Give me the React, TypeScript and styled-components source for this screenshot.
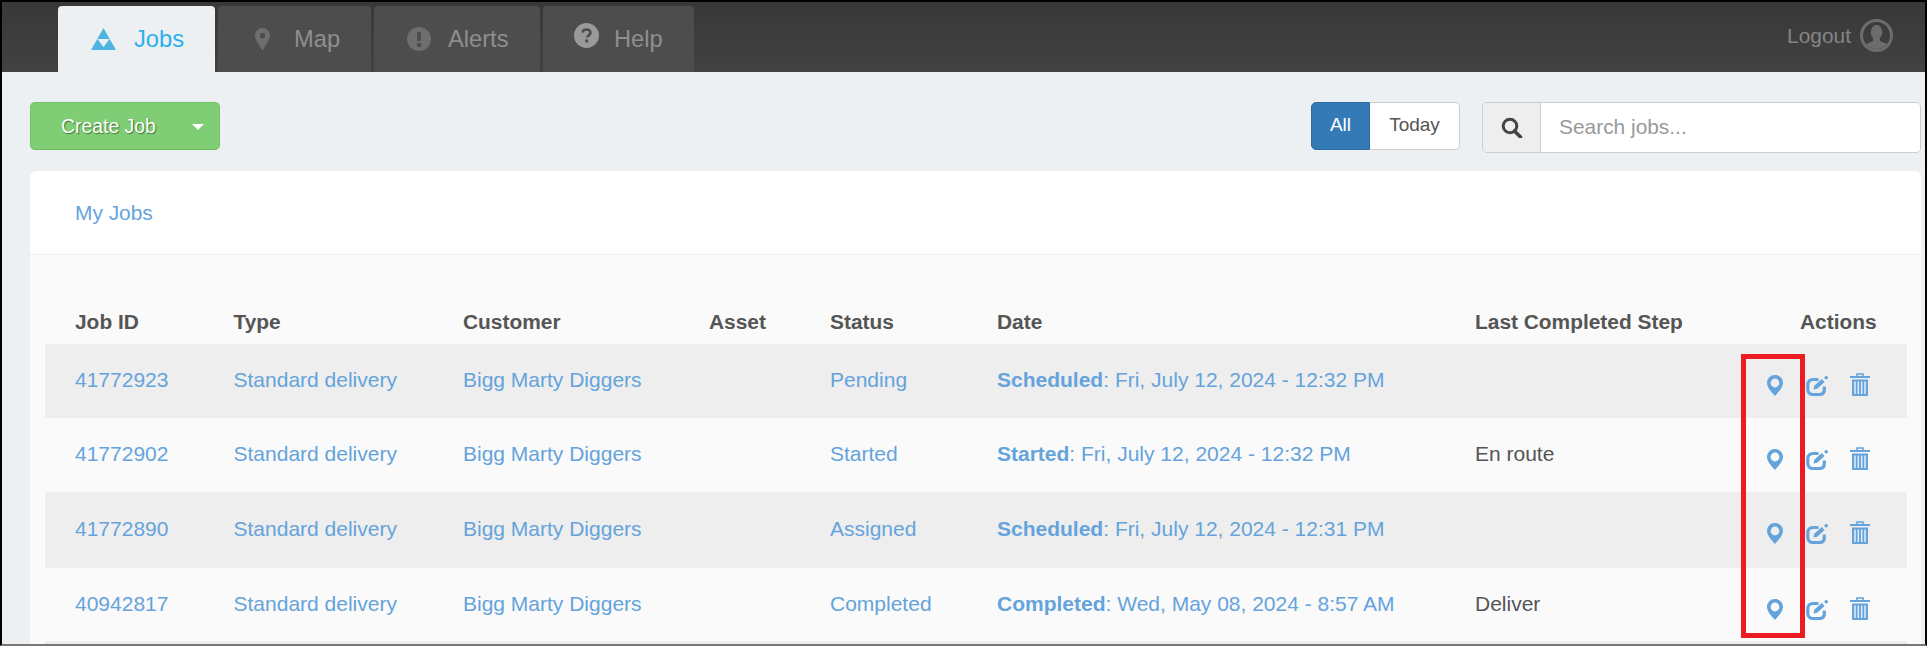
import React from "react";
import styled, { createGlobalStyle } from "styled-components";

const Global = createGlobalStyle`
  html, body { margin: 0; padding: 0; background: #fff; overflow: hidden; }
  * { box-sizing: border-box; }
  body { font-family: "Liberation Sans", Arial, sans-serif; }
`;

const Frame = styled.div`
  position: relative;
  width: 1927px;
  height: 646px;
  border: 2px solid #000;
  border-bottom: 2px solid #777;
  background: #edf0f3;
  overflow: hidden;
`;

const TopBar = styled.header`
  display: flex;
  height: 70px;
  padding: 4px 32px 0 56px;
  background: linear-gradient(#383838, #424242);
`;

const Tabs = styled.nav`
  display: flex;
  gap: 3px;
`;

const Tab = styled.a<{ $width: number; $pad: number; $gap: number; $active?: boolean }>`
  display: flex;
  align-items: center;
  width: ${(p) => p.$width}px;
  padding-left: ${(p) => p.$pad}px;
  gap: ${(p) => p.$gap}px;
  height: 66px;
  border-radius: 4px 4px 0 0;
  font-size: 23.7px;
  background: ${(p) => (p.$active ? "#edf0f3" : "#4d4d4d")};
  color: ${(p) => (p.$active ? "#2bb0ee" : "#8f8f8f")};
`;

const TabIcon = styled.svg<{ $lift?: number }>`
  display: block;
  flex: none;
  margin-top: ${(p) => -(p.$lift ?? 0)}px;
`;

const Logout = styled.div`
  display: flex;
  align-items: center;
  gap: 9px;
  margin-left: auto;
  height: 33px;
  margin-top: 13px;
  font-size: 20.9px;
  color: #858585;
`;

const Content = styled.main`
  padding: 30px 4px 0 28px;
`;

const Toolbar = styled.div`
  display: flex;
  align-items: flex-start;
  height: 51px;
`;

const CreateButton = styled.button`
  display: flex;
  align-items: center;
  width: 190px;
  height: 48px;
  padding: 0 0 0 30px;
  border: 1px solid #74c267;
  border-bottom-color: #66b85a;
  border-radius: 5px;
  background: #7fcd74;
  color: #fff;
  font: 19.4px "Liberation Sans", Arial, sans-serif;
  text-shadow: 1px 1px 1px rgba(40, 90, 30, 0.75);
`;

const Caret = styled.span`
  width: 0;
  height: 0;
  margin-left: 36px;
  margin-top: 2px;
  border-top: 6px solid #fff;
  border-left: 6px solid transparent;
  border-right: 6px solid transparent;
`;

const Segments = styled.div`
  display: flex;
  margin-left: auto;
  height: 48px;
`;

const Segment = styled.button<{ $active?: boolean }>`
  height: 48px;
  width: ${(p) => (p.$active ? 59 : 90)}px;
  padding: 0 0 2px;
  border: 1px solid ${(p) => (p.$active ? "#2e6da4" : "#ccc")};
  border-left-width: ${(p) => (p.$active ? 1 : 0)}px;
  border-radius: ${(p) => (p.$active ? "5px 0 0 5px" : "0 5px 5px 0")};
  background: ${(p) => (p.$active ? "#337ab7" : "#fff")};
  color: ${(p) => (p.$active ? "#fff" : "#555")};
  font: 19px "Liberation Sans", Arial, sans-serif;
`;

const Search = styled.div`
  display: flex;
  width: 439px;
  height: 51px;
  margin-left: 22px;
  border: 1px solid #ccc;
  border-radius: 5px;
  overflow: hidden;
`;

const SearchAddon = styled.span`
  display: flex;
  align-items: center;
  justify-content: center;
  width: 58px;
  flex: none;
  background: #eee;
  border-right: 1px solid #ccc;
`;

const SearchInput = styled.input`
  flex: 1;
  min-width: 0;
  border: 0;
  outline: 0;
  padding: 0 0 1px 18px;
  background: #fff;
  font: 20.9px "Liberation Sans", Arial, sans-serif;
  &::placeholder { color: #999; opacity: 1; }
`;

const Card = styled.section`
  margin-top: 18px;
  background: #fafafa;
  border-radius: 7px 7px 0 0;
  height: 480px;
`;

const CardHead = styled.div`
  display: flex;
  align-items: center;
  height: 84px;
  padding-left: 45px;
  background: #fff;
  border-bottom: 1px solid #eee;
  border-radius: 7px 7px 0 0;
  font-size: 20.9px;
  color: #65a3dc;
`;

const TableBody = styled.div`
  padding: 0 14px 0 15px;
`;

const columns = "158.5px 229.5px 246px 121px 167px 478px 292px 1fr";

const HeadRow = styled.div`
  display: grid;
  grid-template-columns: ${columns};
  align-items: center;
  height: 89px;
  padding: 45px 0 0 30px;
  font-size: 20.9px;
  font-weight: 700;
  color: #555;
`;

const HeadActions = styled.span`
  padding-left: 33px;
`;

const Row = styled.div<{ $height: number; $odd: boolean }>`
  display: grid;
  grid-template-columns: ${columns};
  align-items: center;
  height: ${(p) => p.$height}px;
  padding-left: 30px;
  padding-bottom: 2px;
  font-size: 21px;
  color: #65a3dc;
  background: ${(p) => (p.$odd ? "#eee" : "#fafafa")};
`;

const StepCell = styled.span`
  color: #555;
`;

const ActionCell = styled.span`
  display: flex;
  align-items: flex-end;
  gap: 22px;
  align-self: start;
  height: 23px;
  margin-top: 29px;
`;

const ActionIcon = styled.svg`
  display: block;
  flex: none;
`;

const Callout = styled.div`
  position: absolute;
  left: 1739px;
  top: 352px;
  width: 64px;
  height: 284px;
  border: 5px solid #ed1c24;
  pointer-events: none;
`;

const PinPath = "M8 0C3.6 0 0 3.5 0 7.9c0 4.9 5.6 10 8 13.1 2.4-3.1 8-8.2 8-13.1C16 3.5 12.4 0 8 0zm0 3.6a4.4 4.4 0 1 1 0 8.8 4.4 4.4 0 0 1 0-8.8z";

const JobsIcon = () => (
  <TabIcon width="25" height="22" viewBox="0 0 25 22">
    <path d="M12.5 0 25 22H0z" fill="#4fb4e2" />
    <path d="M6.5 11h12l-6 8z" fill="#edf0f3" />
  </TabIcon>
);
const MapIcon = () => (
  <TabIcon width="15" height="23" viewBox="0 0 15 23">
    <path fillRule="evenodd" d="M7.5 0C3.4 0 0 3.3 0 7.4 0 12 5.4 18.400 7.500 23c2.100-4.600 7.500-11 7.500-15.600C15 3.300 11.600 0 7.500 0zm0 4.800a2.800 2.800 0 1 1 0 5.600 2.800 2.800 0 0 1 0-5.600z" fill="#6e6e6e" />
  </TabIcon>
);
const AlertIcon = () => (
  <TabIcon width="24" height="24" viewBox="0 0 24 24">
    <circle cx="12" cy="12" r="12" fill="#6e6e6e" />
    <rect x="10" y="5" width="4" height="9" rx="1" fill="#4d4d4d" />
    <rect x="10" y="16" width="4" height="4" rx="1" fill="#4d4d4d" />
  </TabIcon>
);
const HelpIcon = () => (
  <TabIcon $lift={7} width="25" height="25" viewBox="0 0 25 25">
    <circle cx="12.500" cy="12.500" r="12.500" fill="#999" />
    <path d="M8.500 9.500c.3-2 1.900-3 4-3 2.300 0 3.900 1.300 3.900 3.200 0 2.700-3 2.600-3 4.800" fill="none" stroke="#4d4d4d" strokeWidth="2.600" />
    <rect x="11.200" y="16.500" width="3" height="3" fill="#4d4d4d" />
  </TabIcon>
);
const Avatar = () => (
  <svg width="33" height="33" viewBox="0 0 33 33" style={{ display: "block" }}>
    <defs>
      <clipPath id="avatar-clip"><circle cx="16.500" cy="16.500" r="13.500" /></clipPath>
    </defs>
    <circle cx="16.500" cy="16.500" r="15" fill="none" stroke="#6c6c6c" strokeWidth="3" />
    <g clipPath="url(#avatar-clip)" fill="#6c6c6c">
      <ellipse cx="16.500" cy="13" rx="5.800" ry="7.200" />
      <path d="M13 19h7v3l7 3v8H6v-8l7-3z" />
    </g>
  </svg>
);
const SearchGlyph = () => (
  <svg width="22" height="21" viewBox="0 0 22 21" style={{ display: "block" }}>
    <circle cx="9" cy="9" r="6.800" fill="none" stroke="#444" strokeWidth="3" />
    <path d="M13.500 14l6 6" stroke="#444" strokeWidth="3.600" strokeLinecap="round" />
  </svg>
);
const PinIcon = () => (
  <ActionIcon width="17" height="21" viewBox="0 0 17 21">
    <path fillRule="evenodd" d={PinPath} fill="#65a3dc" />
  </ActionIcon>
);
const EditIcon = () => (
  <ActionIcon width="22" height="20" viewBox="0 0 22 20">
    <path d="M12.500 3.500H7C3.900 3.500 1.800 5.500 1.800 8.500v5c0 3 2.100 5 5.200 5h6.500c3 0 4.800-2 4.800-5V10.500" fill="none" stroke="#65a3dc" strokeWidth="3.200" />
    <path d="M7.500 13.500l.8-3.700 7.400-6.800 2.900 2.900-7.400 6.800z" fill="#65a3dc" />
    <circle cx="20.200" cy="1.800" r="1.800" fill="#65a3dc" />
  </ActionIcon>
);
const TrashIcon = () => (
  <ActionIcon width="20" height="23" viewBox="0 0 20 23">
    <path d="M7 3V1h6v2" fill="none" stroke="#65a3dc" strokeWidth="1.600" />
    <rect x="0" y="3" width="20" height="2" fill="#65a3dc" />
    <path d="M2 6.500h16V23H2z" fill="#65a3dc" />
    <path d="M5 8.500v12.500M8.300 8.500v12.500M11.700 8.500v12.500M15 8.500v12.500" stroke="#e3eef9" strokeWidth="1.500" />
  </ActionIcon>
);

const tabs = [
  { label: "Jobs", width: 157, pad: 33, gap: 18, active: true, icon: <JobsIcon /> },
  { label: "Map", width: 153, pad: 37, gap: 24, icon: <MapIcon /> },
  { label: "Alerts", width: 166, pad: 33, gap: 17, icon: <AlertIcon /> },
  { label: "Help", width: 151, pad: 31, gap: 15, icon: <HelpIcon /> },
];

const jobs = [
  { id: "41772923", status: "Pending", kind: "Scheduled", date: "Fri, July 12, 2024 - 12:32 PM", step: "", h: 74 },
  { id: "41772902", status: "Started", kind: "Started", date: "Fri, July 12, 2024 - 12:32 PM", step: "En route", h: 74 },
  { id: "41772890", status: "Assigned", kind: "Scheduled", date: "Fri, July 12, 2024 - 12:31 PM", step: "", h: 76 },
  { id: "40942817", status: "Completed", kind: "Completed", date: "Wed, May 08, 2024 - 8:57 AM", step: "Deliver", h: 73 },
];

export default function App() {
  return (
    <>
      <Global />
      <Frame>
        <TopBar>
          <Tabs>
            {tabs.map((t) => (
              <Tab key={t.label} $width={t.width} $pad={t.pad} $gap={t.gap} $active={t.active}>
                {t.icon}
                {t.label}
              </Tab>
            ))}
          </Tabs>
          <Logout>
            Logout
            <Avatar />
          </Logout>
        </TopBar>
        <Content>
          <Toolbar>
            <CreateButton>
              Create Job
              <Caret />
            </CreateButton>
            <Segments>
              <Segment $active>All</Segment>
              <Segment>Today</Segment>
            </Segments>
            <Search>
              <SearchAddon>
                <SearchGlyph />
              </SearchAddon>
              <SearchInput placeholder="Search jobs..." />
            </Search>
          </Toolbar>
          <Card>
            <CardHead>My Jobs</CardHead>
            <TableBody>
              <HeadRow>
                <span>Job ID</span>
                <span>Type</span>
                <span>Customer</span>
                <span>Asset</span>
                <span>Status</span>
                <span>Date</span>
                <span>Last Completed Step</span>
                <HeadActions>Actions</HeadActions>
              </HeadRow>
              {jobs.map((j, i) => (
                <Row key={j.id} $height={j.h} $odd={i % 2 === 0}>
                  <span>{j.id}</span>
                  <span>Standard delivery</span>
                  <span>Bigg Marty Diggers</span>
                  <span />
                  <span>{j.status}</span>
                  <span>
                    <b>{j.kind}</b>: {j.date}
                  </span>
                  <StepCell>{j.step}</StepCell>
                  <ActionCell>
                    <PinIcon />
                    <EditIcon />
                    <TrashIcon />
                  </ActionCell>
                </Row>
              ))}
              <Row $height={40} $odd />
            </TableBody>
          </Card>
        </Content>
        <Callout />
      </Frame>
    </>
  );
}
